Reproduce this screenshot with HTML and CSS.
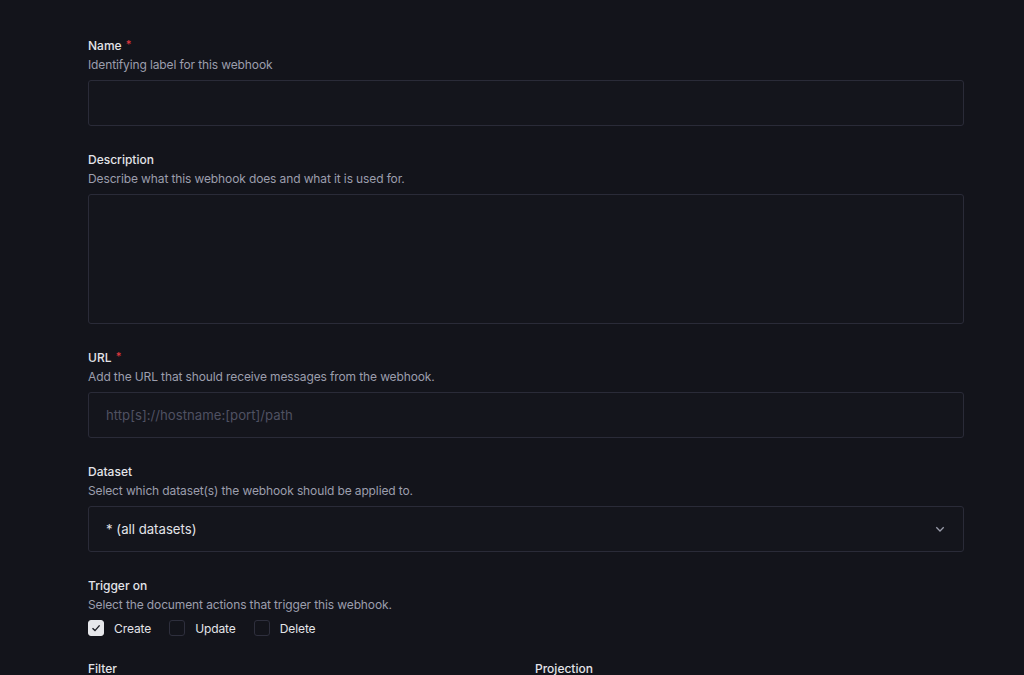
FILE: index.html
```html
<!DOCTYPE html>
<html>
<head>
<meta charset="utf-8">
<link rel="stylesheet" href="styles.css">
</head>
<body>
<div class="form">
  <div class="field">
    <div class="label">Name <span class="req">*</span></div>
    <div class="desc">Identifying label for this webhook</div>
    <div class="input"></div>
  </div>
  <div class="field">
    <div class="label">Description</div>
    <div class="desc">Describe what this webhook does and what it is used for.</div>
    <div class="input textarea"></div>
  </div>
  <div class="field">
    <div class="label">URL <span class="req">*</span></div>
    <div class="desc">Add the URL that should receive messages from the webhook.</div>
    <div class="input"><span class="placeholder">http[s]://hostname:[port]/path</span></div>
  </div>
  <div class="field">
    <div class="label">Dataset</div>
    <div class="desc">Select which dataset(s) the webhook should be applied to.</div>
    <div class="input select"><span class="value">* (all datasets)</span>
      <svg class="chev" width="12" height="12" viewBox="0 0 12 12"><path d="M2.3 4.3 L6 8 L9.7 4.3" fill="none" stroke="#9a9caa" stroke-width="1.3"/></svg>
    </div>
  </div>
  <div class="field">
    <div class="label">Trigger on</div>
    <div class="desc">Select the document actions that trigger this webhook.</div>
    <div class="checks">
      <div class="check"><span class="box checked"><svg width="12" height="12" viewBox="0 0 12 12"><path d="M2.5 6.2 L5 8.6 L9.6 3.4" fill="none" stroke="#1a1b23" stroke-width="1.4"/></svg></span>Create</div>
      <div class="check"><span class="box"></span>Update</div>
      <div class="check"><span class="box"></span>Delete</div>
    </div>
  </div>
  <div class="cols">
    <div class="label">Filter</div>
    <div class="label">Projection</div>
  </div>
</div>
</body>
</html>
```
FILE: styles.css
```css
html, body {
  margin: 0;
  background: #13141b;
  font-family: Inter, "Noto Sans", sans-serif;
  overflow: hidden;
}
.form {
  width: 876px;
  margin-left: 88px;
  padding-top: 37px;
  display: flex;
  flex-direction: column;
  gap: 25px;
}
.field {
  display: flex;
  flex-direction: column;
}
.label {
  height: 18px;
  font-size: 12px;
  line-height: 18px;
  font-weight: 500;
  color: #e3e4e9;
}
.req {
  color: #e5393f;
  font-size: 11px;
  line-height: 0;
  vertical-align: 2px;
  margin-left: 1px;
}
.desc {
  margin-top: 1px;
  height: 18px;
  font-size: 12px;
  line-height: 18px;
  letter-spacing: -0.12px;
  color: #9c9ead;
}
.input {
  margin-top: 6px;
  height: 44px;
  border: 1px solid #2a2b38;
  border-radius: 3px;
  background: #14151c;
  display: flex;
  align-items: center;
  padding: 0 17px;
  font-size: 13.2px;
}
.textarea {
  height: 128px;
}
.placeholder {
  color: #4f5162;
}
.value {
  color: #e3e4e9;
  flex: 1;
}
.checks {
  margin-top: 6px;
  display: flex;
  gap: 18px;
  height: 16px;
  align-items: center;
}
.check {
  display: flex;
  align-items: center;
  gap: 10px;
  font-size: 12px;
  letter-spacing: -0.1px;
  color: #e3e4e9;
}
.box {
  width: 14px;
  height: 14px;
  border: 1px solid #2e2f3d;
  border-radius: 3px;
  display: flex;
  align-items: center;
  justify-content: center;
}
.box.checked {
  background: #e6e7eb;
  border-color: #e6e7eb;
}
.cols {
  display: grid;
  grid-template-columns: 1fr 1fr;
  column-gap: 18px;
  margin-top: -1px;
}
```
